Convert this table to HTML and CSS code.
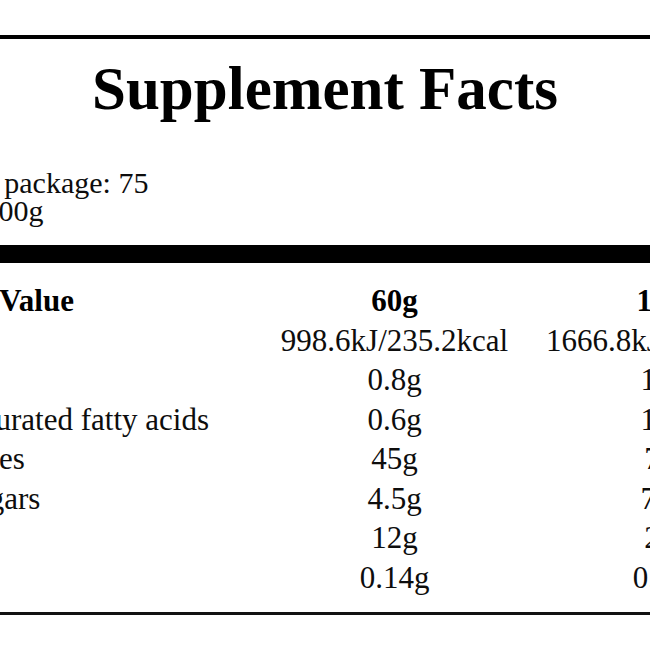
FILE: index.html
```html
<!DOCTYPE html>
<html lang="en">
<head>
<meta charset="utf-8">
<title>Supplement Facts</title>
<link rel="stylesheet" href="styles.css">
</head>
<body>
<div class="label">
  <div class="rule-top"></div>
  <h1 class="title">Supplement Facts</h1>
  <div class="info">
    <div class="info-line">Serving size</div>
    <div class="info-line">Servings per package: 75</div>
    <div class="info-line">Contents: 4500g</div>
  </div>
  <div class="bar"></div>
  <div class="facts">
    <div class="cell name head">Nutritional Value</div>
    <div class="cell val head">60g</div>
    <div class="cell val head">100g</div>

    <div class="cell name">Energy</div>
    <div class="cell val">998.6kJ/235.2kcal</div>
    <div class="cell val">1666.8kJ/392.0kcal</div>

    <div class="cell name">Fat</div>
    <div class="cell val">0.8g</div>
    <div class="cell val">1.3g</div>

    <div class="cell name">of which saturated fatty acids</div>
    <div class="cell val">0.6g</div>
    <div class="cell val">1.0g</div>

    <div class="cell name">Carbohydrates</div>
    <div class="cell val">45g</div>
    <div class="cell val">75g</div>

    <div class="cell name">of which sugars</div>
    <div class="cell val">4.5g</div>
    <div class="cell val">7.5g</div>

    <div class="cell name">Protein</div>
    <div class="cell val">12g</div>
    <div class="cell val">20g</div>

    <div class="cell name">Salt</div>
    <div class="cell val">0.14g</div>
    <div class="cell val">0.23g</div>
  </div>
  <div class="rule-bottom"></div>
</div>
</body>
</html>
```

FILE: styles.css
```css
html, body {
  margin: 0;
  padding: 0;
  background: #fff;
  overflow: hidden;
}

body {
  width: 650px;
  height: 650px;
  font-family: "Liberation Serif", "Times New Roman", serif;
  color: #0d0d0d;
}

.label {
  width: 962px;
  margin-left: -156px;
  padding-top: 35px;
  display: flex;
  flex-direction: column;
}

.rule-top {
  height: 4px;
  background: #000;
}

.title {
  margin: 19px 0 0;
  font-size: 61px;
  line-height: 62px;
  font-weight: bold;
  text-align: center;
  color: #000;
}

.info {
  margin-top: 21px;
  padding-left: 2px;
  font-size: 30px;
  line-height: 28px;
}

.info-line {
  white-space: nowrap;
}

.bar {
  margin-top: 20px;
  height: 18px;
  background: #000;
}

.facts {
  margin-top: 18px;
  display: grid;
  grid-template-columns: 414px 273px 273px;
  font-size: 31px;
  line-height: 39.5px;
}

.cell {
  white-space: nowrap;
}

.val {
  text-align: center;
}

.head {
  font-weight: bold;
  color: #000;
}

.rule-bottom {
  margin-top: 15px;
  height: 3px;
  background: #111;
}
```
